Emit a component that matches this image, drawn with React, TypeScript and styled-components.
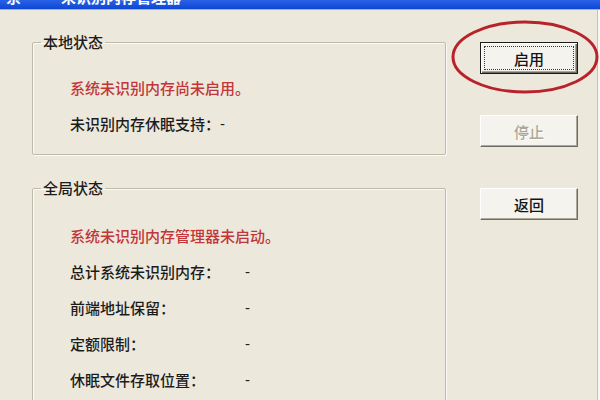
import styled, { createGlobalStyle } from 'styled-components';

const GlobalStyle = createGlobalStyle`
  html, body {
    margin: 0;
    padding: 0;
    background: #ece9dc;
  }
  * {
    box-sizing: border-box;
  }
`;

const Window = styled.div`
  position: relative;
  width: 600px;
  height: 400px;
  overflow: hidden;
  display: flex;
  flex-direction: column;
  background: #ece9dc;
  box-shadow: inset -2px 0 0 #f8f7f2, inset -3px 0 0 #c6c3b4;
  font-family: 'Liberation Sans', 'Noto Sans CJK SC', sans-serif;
  color: #1c1c1c;
`;

const TitleBar = styled.div`
  flex: none;
  height: 10px;
  display: flex;
  align-items: flex-end;
  gap: 40px;
  padding-left: 6px;
  overflow: hidden;
  background: linear-gradient(to bottom, #2a62e6, #0d47d4);
  border-bottom: 1px solid #8fb2f2;
`;

const TitleText = styled.span`
  font-size: 15px;
  line-height: 15px;
  font-weight: bold;
  color: #fff;
  margin-bottom: 4px;
  white-space: nowrap;
`;

const Body = styled.div`
  flex: 1;
  display: flex;
  padding: 22px 0 0 32px;
  min-height: 0;
`;

const LeftColumn = styled.div`
  width: 414px;
  display: flex;
  flex-direction: column;
  gap: 23px;
`;

const RightColumn = styled.div`
  width: 98px;
  margin-left: 34px;
  padding-top: 10px;
  display: flex;
  flex-direction: column;
  gap: 41px;
`;

const GroupBox = styled.fieldset<{ $grow?: boolean }>`
  margin: 0;
  padding: 0 12px 13px 8px;
  border: 1px solid #bdbaa9;
  border-radius: 2px;
  box-shadow: inset 1px 1px 0 #fbfaf6, 1px 1px 0 #fbfaf6;
  flex: ${(p) => (p.$grow ? '1' : 'none')};
  min-width: 0;
`;

const Legend = styled.legend`
  padding: 2px 2px 0;
  font-size: 15px;
  font-weight: 500;
  line-height: 18px;
  color: #1c1c1c;
`;

const Rows = styled.div<{ $top: number }>`
  padding: ${(p) => p.$top}px 0 0 29px;
  display: flex;
  flex-direction: column;
`;

const Row = styled.div`
  height: 36px;
  display: flex;
  align-items: center;
  font-size: 15px;
  font-weight: 500;
  white-space: nowrap;
`;

const Warning = styled(Row)`
  color: #c23539;
`;

const Label = styled.span<{ $width?: number }>`
  width: ${(p) => (p.$width ? `${p.$width}px` : 'auto')};
`;

const Value = styled.span``;

const Button = styled.button<{ $isDefault?: boolean }>`
  height: 32px;
  width: 98px;
  padding: 0;
  font-family: inherit;
  font-size: 15px;
  font-weight: 500;
  color: #141414;
  background: #f4f3ee;
  border-style: solid;
  border-width: 1px;
  border-color: ${(p) => (p.$isDefault ? '#1a1a1a' : '#ffffff #6f6d63 #6f6d63 #ffffff')};
  box-shadow: ${(p) => (p.$isDefault
    ? 'inset 1px 1px 0 #ffffff, inset -1px -1px 0 #6f6d63, inset -2px -2px 0 #aca899'
    : 'inset -1px -1px 0 #aca899')};
  outline: ${(p) => (p.$isDefault ? '1px dotted #3a3a3a' : 'none')};
  outline-offset: -5px;

  &:disabled {
    color: #aca899;
    text-shadow: 1px 1px 0 #ffffff;
  }
`;

const Highlight = styled.svg`
  position: absolute;
  left: 450px;
  top: 19px;
  width: 150px;
  height: 76px;
  pointer-events: none;
`;

export default function App() {
  const globalRows = [
    { label: '总计系统未识别内存：', value: '-' },
    { label: '前端地址保留：', value: '-' },
    { label: '定额限制：', value: '-' },
    { label: '休眠文件存取位置：', value: '-' },
  ];

  return (
    <>
      <GlobalStyle />
      <Window>
        <TitleBar>
          <TitleText>系</TitleText>
          <TitleText>未识别内存管理器</TitleText>
        </TitleBar>
        <Body>
          <LeftColumn>
            <GroupBox>
              <Legend>本地状态</Legend>
              <Rows $top={17}>
                <Warning>系统未识别内存尚未启用。</Warning>
                <Row>
                  <Label>未识别内存休眠支持：</Label>
                  <Value>-</Value>
                </Row>
              </Rows>
            </GroupBox>
            <GroupBox $grow>
              <Legend>全局状态</Legend>
              <Rows $top={19}>
                <Warning>系统未识别内存管理器未启动。</Warning>
                {globalRows.map((r) => (
                  <Row key={r.label}>
                    <Label $width={175}>{r.label}</Label>
                    <Value>{r.value}</Value>
                  </Row>
                ))}
              </Rows>
            </GroupBox>
          </LeftColumn>
          <RightColumn>
            <Button $isDefault>启用</Button>
            <Button disabled>停止</Button>
            <Button>返回</Button>
          </RightColumn>
        </Body>
        <Highlight viewBox="0 0 150 76">
          <ellipse cx="75" cy="38" rx="72" ry="35" fill="none" stroke="#b8222a" strokeWidth="3" />
        </Highlight>
      </Window>
    </>
  );
}
